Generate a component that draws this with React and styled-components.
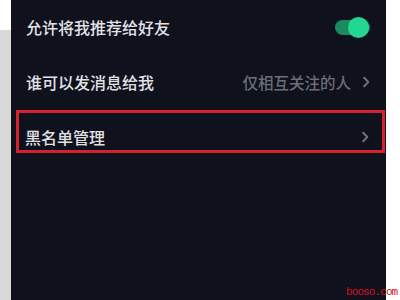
import React from 'react'
import styled, { createGlobalStyle } from 'styled-components'

const GlobalStyle = createGlobalStyle`
  html, body { margin: 0; padding: 0; background: #ffffff; }
  body { font-family: "Noto Sans CJK SC", "Noto Sans", sans-serif; }
`

function Chevron() {
  return (
    <svg width="8" height="12" viewBox="0 0 8 12">
      <path d="M2.2 1.8 L6.3 6 L2.2 10.2" fill="none" stroke="#6d6f79" strokeWidth="2" strokeLinecap="round" strokeLinejoin="round" />
    </svg>
  )
}

function App() {
  return (
    <Page>
      <GlobalStyle />
      <LeftStrip>
        <LeftTop />
      </LeftStrip>
      <Panel>
        <Row $h={54}>
          <Label>允许将我推荐给好友</Label>
          <Toggle>
            <Knob />
          </Toggle>
        </Row>
        <Row $h={55}>
          <Label>谁可以发消息给我</Label>
          <Right>
            <Value>仅相互关注的人</Value>
            <Chevron />
          </Right>
        </Row>
        <Marked>
          <Label>黑名单管理</Label>
          <Chevron />
        </Marked>
      </Panel>
      <RightStrip />
      <Watermark>booso.com</Watermark>
    </Page>
  )
}

export default App

const Page = styled.div`
  position: relative;
  width: 400px;
  height: 300px;
  display: flex;
  overflow: hidden;
`
const LeftStrip = styled.div`
  width: 11px;
  background: #d9d9d9;
`
const LeftTop = styled.div`
  height: 30px;
  background: #ffffff;
`
const Panel = styled.div`
  width: 375px;
  background: #0f111d;
  display: flex;
  flex-direction: column;
`
const RightStrip = styled.div`
  flex: 1;
  background: #ffffff;
`
const Row = styled.div`
  height: ${p => p.$h}px;
  padding: 0 16px 0 15px;
  display: flex;
  align-items: center;
  justify-content: space-between;
`
const Label = styled.span`
  color: #e2e2e6;
  font-size: 16px;
  font-weight: 500;
  line-height: 18px;
`
const Right = styled.div`
  display: flex;
  align-items: center;
  gap: 11px;
`
const Value = styled.span`
  color: #6b6d77;
  font-size: 15.5px;
  font-weight: 500;
  line-height: 18px;
`
const Toggle = styled.div`
  position: relative;
  width: 35px;
  height: 15px;
  border-radius: 8px;
  background: #1b8a63;
`
const Knob = styled.div`
  position: absolute;
  right: 1px;
  top: -3px;
  width: 21px;
  height: 21px;
  border-radius: 50%;
  background: #22d890;
`
const Marked = styled.div`
  margin: 1px 1px 0 5px;
  height: 43px;
  box-sizing: border-box;
  border: 3px solid #d5222d;
  padding: 15px 13px 4px 6px;
  display: flex;
  align-items: center;
  justify-content: space-between;
`
const Watermark = styled.div`
  position: absolute;
  left: 346px;
  top: 285px;
  color: #d3141e;
  font-family: "Liberation Mono", monospace;
  font-size: 11px;
  letter-spacing: -0.9px;
  line-height: 14px;
  white-space: nowrap;
`
